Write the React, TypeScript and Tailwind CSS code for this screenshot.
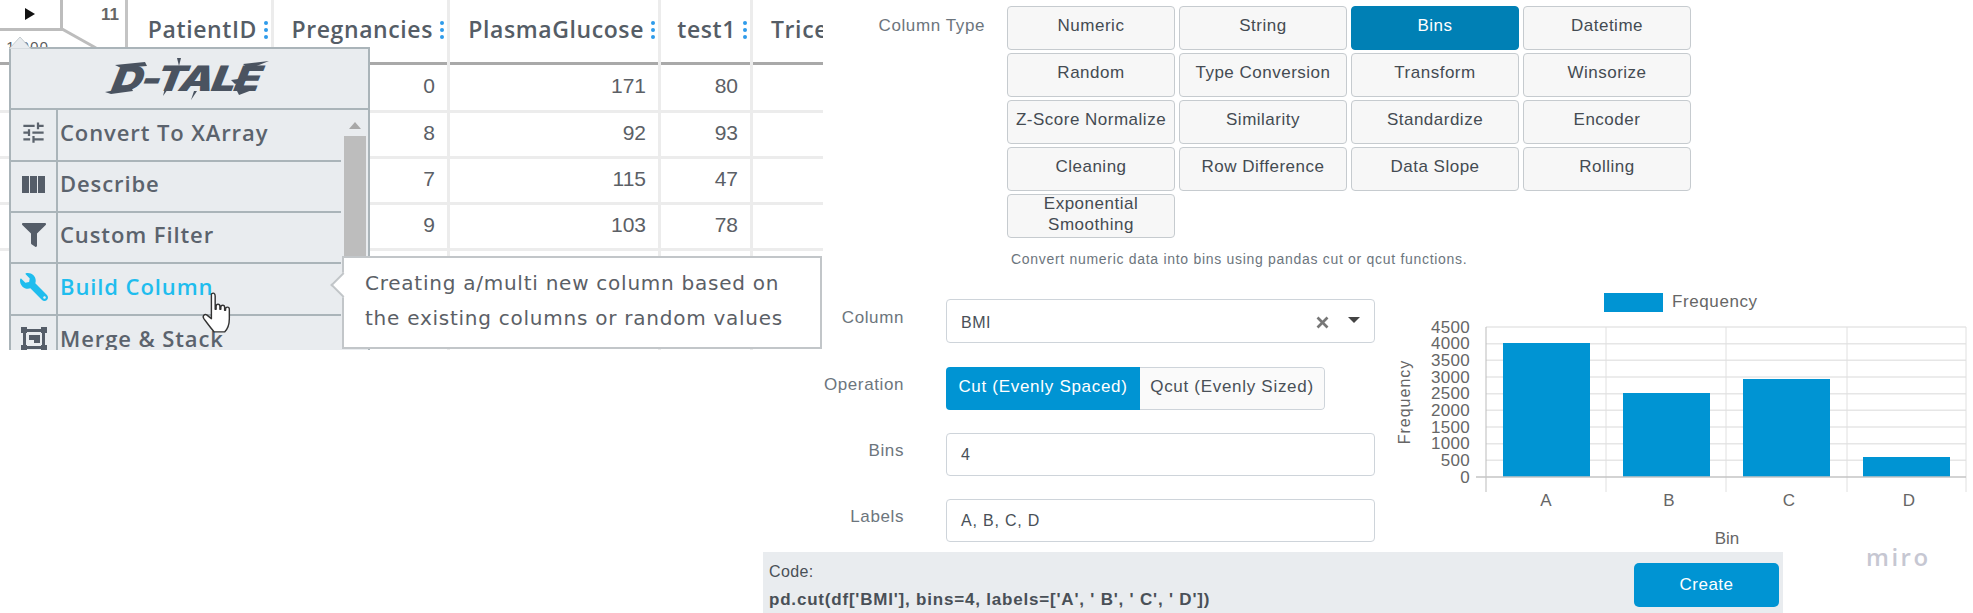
import { FaFilter, FaWrench } from "react-icons/fa";
import { MdTune } from "react-icons/md";

const tabs = [
  "Numeric", "String", "Bins", "Datetime",
  "Random", "Type Conversion", "Transform", "Winsorize",
  "Z-Score Normalize", "Similarity", "Standardize", "Encoder",
  "Cleaning", "Row Difference", "Data Slope", "Rolling",
  "Exponential Smoothing",
];

const columns = [
  { name: "PatientID", width: "w-[146px]", values: ["", "", "", ""] },
  { name: "Pregnancies", width: "w-[176px]", values: ["0", "8", "7", "9"] },
  { name: "PlasmaGlucose", width: "w-[211px]", values: ["171", "92", "115", "103"] },
  { name: "test1", width: "w-[92px]", values: ["80", "93", "47", "78"] },
];

const rowHeights = ["h-[48px]", "h-[46px]", "h-[46px]", "h-[46px]"];

function ColumnDots() {
  return (
    <span className="ml-[7px] flex flex-col gap-[3px]">
      <i className="block h-[4px] w-[4px] rounded-full bg-[#2f9bea]" />
      <i className="block h-[4px] w-[4px] rounded-full bg-[#2f9bea]" />
      <i className="block h-[4px] w-[4px] rounded-full bg-[#2f9bea]" />
    </span>
  );
}

function DataTable() {
  return (
    <div className="flex h-full">
      <div className="w-[128px] shrink-0">
        <div className="relative h-[65px] border-r-[3px] border-b-[3px] border-r-[#c4c4c4] border-b-[#a9a9a9]">
          <div className="flex h-[31px] w-[63px] items-center justify-center border-r-[3px] border-b-[3px] border-[#bdbdbd]">
            <i className="block h-0 w-0 border-y-[6px] border-l-[10px] border-y-transparent border-l-[#111]" />
          </div>
          <span className="absolute right-[6px] top-[2px] font-['Liberation_Sans',sans-serif] text-[17px] font-bold text-[#666]">11</span>
          <span className="absolute left-[6px] top-[36px] text-[15px] leading-[20px] tracking-[1px] text-[#555]">1,000</span>
          <svg className="absolute left-[60px] top-[28px]" width="40" height="24" viewBox="0 0 40 24">
            <line x1="2" y1="1" x2="36" y2="20" stroke="#bdbdbd" strokeWidth="3" />
          </svg>
        </div>
        {rowHeights.map((h, i) => (
          <div key={i} className={`${h} border-b-[3px] border-[#ececec]`} />
        ))}
      </div>
      {columns.map((col) => (
        <div key={col.name} className={`${col.width} shrink-0 border-r-[3px] border-[#ececec]`}>
          <div className="flex h-[65px] items-center justify-end border-b-[3px] border-[#a9a9a9] pb-[3px] pr-[3px] text-[23px] font-semibold tracking-[0.6px] text-[#555d66]">
            {col.name}
            <ColumnDots />
          </div>
          {col.values.map((value, i) => (
            <div key={i} className={`flex ${rowHeights[i]} items-center justify-end border-b-[3px] border-[#ececec] pb-[3px] pr-[12px] font-['Liberation_Sans',sans-serif] text-[21px] text-[#5b6066]`}>
              {value}
            </div>
          ))}
        </div>
      ))}
      <div className="min-w-0 flex-1">
        <div className="flex h-[65px] items-center border-b-[3px] border-[#a9a9a9] pb-[3px] pl-[18px] text-[23px] font-semibold tracking-[0.6px] text-[#555d66]">
          Trice
        </div>
        {rowHeights.map((h, i) => (
          <div key={i} className={`${h} border-b-[3px] border-[#ececec]`} />
        ))}
      </div>
    </div>
  );
}

function MergeIcon() {
  return (
    <svg width="26" height="24" viewBox="0 0 26 24" fill="#555d68">
      <path d="M2 2h22v20H2zM5 5v14h16V5z" fillRule="evenodd" />
      <rect x="0" y="0" width="6" height="6" />
      <rect x="20" y="0" width="6" height="6" />
      <rect x="0" y="18" width="6" height="6" />
      <rect x="20" y="18" width="6" height="6" />
      <path d="M8 13V8h11v8h-6v-3z" />
    </svg>
  );
}

function DescribeIcon() {
  return (
    <svg width="23" height="17" viewBox="0 0 23 17" fill="#555d68">
      <rect x="0" y="0" width="7" height="17" />
      <rect x="8" y="0" width="7" height="17" />
      <rect x="16" y="0" width="7" height="17" />
    </svg>
  );
}

function Hand() {
  return (
    <svg className="absolute left-[201px] top-[291px]" width="34" height="44" viewBox="0 0 36 46">
      <path
        d="M11 3c2-2 4-1 4 2v14l1 0v-3c0-3 4-3 4 0v3h1v-2c0-3 4-3 4 0v3h1v-1c0-3 4-3 4 0v10c0 7-3 12-5 14H14c-3-3-8-10-11-14-2-3 1-5 3-4l5 4V5z"
        fill="white"
        stroke="#333"
        strokeWidth="1.5"
        strokeLinejoin="round"
      />
    </svg>
  );
}

function MenuRow({ icon, label, active, height }: { icon: React.ReactNode; label: string; active?: boolean; height: string }) {
  return (
    <div className={`flex ${height} shrink-0 border-b-[2px] border-[#aab4b9]`}>
      <div className="flex w-[47px] shrink-0 items-center justify-center border-r-[2px] border-[#aab4b9] pb-[5px]">{icon}</div>
      <div className={`flex items-center pb-[6px] pl-[2px] text-[22px] font-semibold tracking-[0.9px] ${active ? "text-[#1fbdee]" : "text-[#5b636d]"}`}>
        {label}
      </div>
    </div>
  );
}

function DtaleLogo() {
  return (
    <div className="relative -ml-[6px] flex h-[46px] w-[164px] items-center justify-center">
      <span className="-skew-x-[18deg] scale-x-[1.22] font-['Inter',sans-serif] text-[35px] font-black leading-none tracking-[-1.5px] text-[#4a5360]">
        D-TALE
      </span>
      {/* brush strokes around the lettering */}
      <svg className="absolute left-0 top-0" width="164" height="46" viewBox="0 0 164 46" fill="#4a5360">
        <path d="M0 36l26-5 2 4-22 3z" />
        <path d="M10 9l30-3 2 4-26 2z" />
        <path d="M138 8l26-3-20 8z" />
        <path d="M126 24l28-4-24 8z" />
        <path d="M132 35l20-3-18 7z" />
        <path d="M72 2l4 0-2 8z" />
        <path d="M86 44l3-9 3 0z" />
        <path d="M58 40l2-8 3 1z" />
      </svg>
    </div>
  );
}

function Menu() {
  return (
    <div className="absolute left-[9px] top-[47px] h-[320px] w-[361px] border-[2px] border-[#aab4b9] bg-[#e9ecef]">
      <svg className="absolute left-[-2px] top-[-13px]" width="26" height="13" viewBox="0 0 26 13">
        <path d="M0 13L11 1l11 12z" fill="#e9ecef" stroke="#c4ccd0" strokeWidth="1" />
      </svg>
      <div className="flex h-[61px] items-center justify-center border-b-[2px] border-[#aab4b9]">
        <DtaleLogo />
      </div>
      <div className="flex">
        <div className="w-[330px]">
          <MenuRow height="h-[52px]" label="Convert To XArray" icon={<MdTune size={27} color="#5b636d" />} />
          <MenuRow height="h-[51px]" label="Describe" icon={<DescribeIcon />} />
          <MenuRow height="h-[51px]" label="Custom Filter" icon={<FaFilter size={24} color="#555d68" />} />
          <MenuRow height="h-[52px]" label="Build Column" active icon={<FaWrench size={28} color="#1fbdee" className="-scale-x-100" />} />
          <MenuRow height="h-[52px]" label="Merge & Stack" icon={<MergeIcon />} />
        </div>
        <div className="flex w-[27px] flex-col items-center pt-[12px]">
          <i className="block h-0 w-0 border-x-[6px] border-b-[7px] border-x-transparent border-b-[#a8a8a8]" />
          <i className="mt-[7px] block h-[200px] w-[22px] bg-[#bdbdbd]" />
        </div>
      </div>
    </div>
  );
}

function Tooltip() {
  return (
    <div className="absolute left-[342px] top-[256px] h-[93px] w-[480px] border-[2px] border-[#c2c6c9] bg-white pl-[21px] pt-[8px] font-['DejaVu_Sans',sans-serif] text-[20px] leading-[35px] tracking-[0.75px] text-[#5b6066]">
      <i className="absolute left-[-10px] top-[18px] block h-[18px] w-[18px] rotate-45 border-b-[2px] border-l-[2px] border-[#c2c6c9] bg-white" />
      <p className="relative whitespace-nowrap">Creating a/multi new column based on</p>
      <p className="relative whitespace-nowrap">the existing columns or random values</p>
    </div>
  );
}

function LeftPane() {
  return (
    <div className="relative h-[350px] w-[823px] shrink-0 overflow-hidden font-['Open_Sans',sans-serif]">
      <DataTable />
      <Menu />
      <Tooltip />
      <Hand />
    </div>
  );
}

function FormRow({ label, children, className }: { label: string; children: React.ReactNode; className?: string }) {
  return (
    <div className={`flex items-center ${className ?? ""}`}>
      <span className="w-[81px] whitespace-nowrap pb-[7px] text-right text-[17px] tracking-[0.6px] text-[#6c757d]">{label}</span>
      <div className="ml-[42px]">{children}</div>
    </div>
  );
}

function Chart() {
  const gridY = [327, 343.7, 360.3, 377, 393.7, 410.3, 427, 443.7, 460.3];
  const gridX = [1486, 1606, 1726, 1847, 1966];
  const ticks = ["4500", "4000", "3500", "3000", "2500", "2000", "1500", "1000", "500", "0"];
  const bars = [
    { x: 1503, top: 343 },
    { x: 1623, top: 393 },
    { x: 1743, top: 379 },
    { x: 1863, top: 457 },
  ];
  const binLabels = [
    { label: "A", x: 1546 },
    { label: "B", x: 1669 },
    { label: "C", x: 1789 },
    { label: "D", x: 1909 },
  ];
  return (
    <svg className="shrink-0" width="588" height="267" viewBox="1385 285 588 267" fontFamily="Liberation Sans, sans-serif">
      <rect x="1604" y="293" width="59" height="19" fill="#0094d3" />
      <text x="1672" y="307" fontSize="17" letterSpacing="0.6" fill="#666">Frequency</text>
      {gridY.map((y) => (
        <line key={y} x1="1486" x2="1966" y1={y} y2={y} stroke="#e6e6e6" strokeWidth="1.5" />
      ))}
      {gridX.map((x) => (
        <line key={x} x1={x} x2={x} y1="327" y2="492" stroke={x === 1486 ? "#bbb" : "#e0e0e0"} strokeWidth="1" />
      ))}
      {bars.map((bar) => (
        <rect key={bar.x} x={bar.x} y={bar.top} width="87" height={477 - bar.top} fill="#0094d3" />
      ))}
      <line x1="1476" x2="1966" y1="477" y2="477" stroke="#c4c4c4" strokeWidth="1.5" />
      {ticks.map((tick, i) => (
        <text key={tick} x="1470" y={332.5 + i * 16.67} textAnchor="end" fontSize="17" letterSpacing="0.3" fill="#666">{tick}</text>
      ))}
      {binLabels.map((bin) => (
        <text key={bin.label} x={bin.x} y="506" textAnchor="middle" fontSize="17" fill="#666">{bin.label}</text>
      ))}
      <text x="1727" y="544" textAnchor="middle" fontSize="17" fill="#666">Bin</text>
      <text transform="translate(1410 402) rotate(-90)" textAnchor="middle" fontSize="16" letterSpacing="1" fill="#666">Frequency</text>
    </svg>
  );
}

export default function App() {
  return (
    <div className="relative flex h-[613px] w-[1973px] overflow-hidden bg-white font-['Liberation_Sans',sans-serif]">
      <LeftPane />
      <div className="flex min-w-0 flex-1 flex-col">
        <div className="flex pt-[6px]">
          <span className="w-[162px] whitespace-nowrap pt-[7px] text-right text-[17px] tracking-[0.6px] text-[#6c757d]">Column Type</span>
          <div className="ml-[22px] grid w-[684px] grid-cols-4 gap-x-[4px] gap-y-[3px]">
            {tabs.map((tab) => (
              <button
                key={tab}
                className={`flex h-[44px] items-center justify-center rounded-[4px] border-[1.5px] px-[2px] pb-[5px] text-center text-[17px] leading-[21px] tracking-[0.5px] ${
                  tab === "Bins"
                    ? "border-[#0080b5] bg-[#0080b5] text-white"
                    : "border-[#c6cbcf] bg-[#f7f7f7] text-[#444b52]"
                }`}
              >
                {tab}
              </button>
            ))}
          </div>
        </div>
        <p className="ml-[188px] mt-[11px] h-[21px] text-[14px] leading-[20px] tracking-[0.7px] text-[#6c757d]">
          Convert numeric data into bins using pandas cut or qcut functions.
        </p>
        <div className="mt-[15px] flex min-h-0 flex-1">
          <div className="flex w-[562px] shrink-0 flex-col pt-[14px]">
            <FormRow label="Column">
              <div className="flex h-[44px] w-[429px] items-center rounded-[4px] border-[1.5px] border-[#ced4da] pl-[14px] pr-[14px] pt-[3px] text-[16px] tracking-[0.5px] text-[#495057]">
                <span className="flex-1">BMI</span>
                <svg width="13" height="13" viewBox="0 0 13 13" stroke="#777" strokeWidth="2.6">
                  <line x1="1.5" y1="1.5" x2="11.5" y2="11.5" />
                  <line x1="11.5" y1="1.5" x2="1.5" y2="11.5" />
                </svg>
                <i className="mb-[5px] ml-[19px] block h-0 w-0 border-x-[6px] border-t-[6px] border-x-transparent border-t-[#444]" />
              </div>
            </FormRow>
            <FormRow label="Operation" className="mt-[24px]">
              <div className="flex h-[43px] w-[379px] overflow-hidden rounded-[4px] text-[17px] tracking-[0.7px]">
                <span className="flex w-[194px] items-center justify-center whitespace-nowrap bg-[#0094d3] pb-[3px] text-white">Cut (Evenly Spaced)</span>
                <span className="flex flex-1 items-center justify-center whitespace-nowrap rounded-r-[4px] border-[1.5px] border-l-0 border-[#ced4da] bg-[#fafafa] pb-[3px] text-[#495057]">Qcut (Evenly Sized)</span>
              </div>
            </FormRow>
            <FormRow label="Bins" className="mt-[23px]">
              <div className="flex h-[43px] w-[429px] items-center rounded-[4px] border-[1.5px] border-[#ced4da] pl-[14px] text-[16px] text-[#495057]">4</div>
            </FormRow>
            <FormRow label="Labels" className="mt-[23px]">
              <div className="flex h-[43px] w-[429px] items-center rounded-[4px] border-[1.5px] border-[#ced4da] pl-[14px] text-[16px] tracking-[0.8px] text-[#495057]">A, B, C, D</div>
            </FormRow>
          </div>
          <Chart />
        </div>
        <div className="-ml-[60px] flex h-[61px] w-[1020px] shrink-0 items-center bg-[#e9ecef] pl-[6px] pr-[4px]">
          <div className="flex-1 pt-[6px] text-[16px] leading-[28px] text-[#495057]">
            <div className="tracking-[0.4px]">Code:</div>
            <div className="text-[17px] font-bold tracking-[0.8px]">pd.cut(df['BMI'], bins=4, labels=['A', ' B', ' C', ' D'])</div>
          </div>
          <button className="mt-[4px] h-[44px] w-[145px] rounded-[5px] bg-[#0094d3] text-[17px] tracking-[0.5px] text-white">Create</button>
        </div>
      </div>
      <span className="absolute left-[1866px] top-[542px] font-['Open_Sans',sans-serif] text-[24px] leading-[30px] font-semibold tracking-[2.5px] text-[#c6c7d2]">miro</span>
    </div>
  );
}
